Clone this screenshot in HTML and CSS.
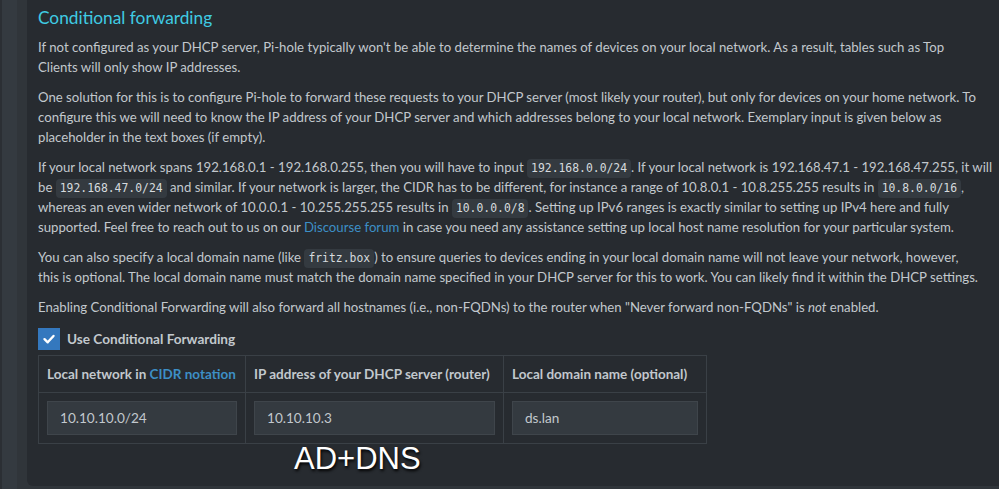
FILE: index.html
```html
<!DOCTYPE html>
<html lang="en">
<head>
<meta charset="utf-8" />
<meta name="viewport" content="width=device-width, initial-scale=1" />
<title>DNS Settings - Pi-hole</title>
<link rel="stylesheet" href="styles.css">
</head>
<body>
<div class="wrapper">
  <!-- Box: Conditional forwarding -->
  <section class="box">
    <h3 class="box-title">Conditional forwarding</h3>
    <p>If not configured as your DHCP server, Pi-hole typically won't be able to determine the names of devices on your local network. As a result, tables such as Top<br>Clients will only show IP addresses.</p>
    <p>One solution for this is to configure Pi-hole to forward these requests to your DHCP server (most likely your router), but only for devices on your home network. To<br>configure this we will need to know the IP address of your DHCP server and which addresses belong to your local network. Exemplary input is given below as<br>placeholder in the text boxes (if empty).</p>
    <p>If your local network spans 192.168.0.1 - 192.168.0.255, then you will have to input <code>192.168.0.0/24</code>. If your local network is 192.168.47.1 - 192.168.47.255, it will<br>be <code>192.168.47.0/24</code> and similar. If your network is larger, the CIDR has to be different, for instance a range of 10.8.0.1 - 10.8.255.255 results in <code>10.8.0.0/16</code>,<br>whereas an even wider network of 10.0.0.1 - 10.255.255.255 results in <code>10.0.0.0/8</code>. Setting up IPv6 ranges is exactly similar to setting up IPv4 here and fully<br>supported. Feel free to reach out to us on our <a href="#">Discourse forum</a> in case you need any assistance setting up local host name resolution for your particular system.</p>
    <p>You can also specify a local domain name (like <code>fritz.box</code>) to ensure queries to devices ending in your local domain name will not leave your network, however,<br>this is optional. The local domain name must match the domain name specified in your DHCP server for this to work. You can likely find it within the DHCP settings.</p>
    <p>Enabling Conditional Forwarding will also forward all hostnames (i.e., non-FQDNs) to the router when "Never forward non-FQDNs" is <em>not</em> enabled.</p>

    <label class="check">
      <span class="check-box">
        <svg viewBox="0 0 22 22" width="22" height="22"><path d="M6.5 11.2l3.2 3.1 5.8-6.3" fill="none" stroke="#fff" stroke-width="2.4" stroke-linecap="round" stroke-linejoin="round"/></svg>
      </span>
      <span class="check-label">Use Conditional Forwarding</span>
    </label>

    <table class="cf-table">
      <colgroup><col class="c1"><col class="c2"><col class="c3"></colgroup>
      <tr>
        <th>Local network in <a href="#">CIDR notation</a></th>
        <th>IP address of your DHCP server (router)</th>
        <th>Local domain name (optional)</th>
      </tr>
      <tr>
        <td><input type="text" value="10.10.10.0/24"></td>
        <td><input type="text" value="10.10.10.3"></td>
        <td><input type="text" value="ds.lan"></td>
      </tr>
    </table>
  </section>
  <div class="note">AD+DNS</div>
</div>
</body>
</html>
```

FILE: styles.css
```css
:root{--box:#272b30;--fg:#c2c8cd;--title:#3fcbe3;--link:#3d8fc6;--line:#3a4046;--field:#343a40}
html,body{margin:0;height:100%;overflow:hidden}
body{background:linear-gradient(90deg,#2b2f34 0,#2b2f34 2px,#343a40 2px,#343a40 17px,#30353a 17px);color:var(--fg);font-family:Lato,"Noto Sans",sans-serif;font-size:13.2px;line-height:20px}

.wrapper{position:relative;padding-left:27px;height:486px}

/* Box */
.box{background:var(--box);height:100%;padding:8px 11px 0;border-radius:0 0 0 6px;box-sizing:border-box}
.box-title{margin:0 0 9px;font-size:17.3px;line-height:20px;font-weight:400;color:var(--title)}
.box p{margin:0 0 10px;white-space:nowrap}
.box a{color:var(--link);text-decoration:none}
code{font-family:"DejaVu Sans Mono",monospace;font-size:11.4px;line-height:1;background:#343a40;color:#d6dade;padding:2px 4px 3px;border-radius:4px}

/* Checkbox */
.check{display:flex;align-items:center;gap:7px;margin-top:11px;height:22px}
.check-box{width:22px;height:22px;background:#3478be;display:flex}
.check-label{font-size:13.6px;font-weight:700}

/* Tabelle */
.cf-table{margin-top:5px;border-collapse:collapse;table-layout:fixed;width:668px}
.cf-table .c1{width:207px}
.cf-table .c2{width:258px}
.cf-table .c3{width:203px}
.cf-table th,.cf-table td{border:1px solid var(--line);padding:8px;text-align:left}
.cf-table th{height:20px;padding-top:8px;padding-bottom:8px;font-size:13.5px;font-weight:700;white-space:nowrap}
.cf-table input{display:block;width:100%;height:34px;box-sizing:border-box;background:var(--field);border:1px solid #3f454b;color:var(--fg);font:13.6px Lato,"Noto Sans",sans-serif;padding:0 12px;outline:none}

/* Beschriftung über dem Screenshot */
.note{position:absolute;left:294px;top:441px;font-family:"Liberation Sans",Arial,sans-serif;font-size:31px;line-height:36px;color:#fff;text-shadow:1px 2px 3px #000}
```
